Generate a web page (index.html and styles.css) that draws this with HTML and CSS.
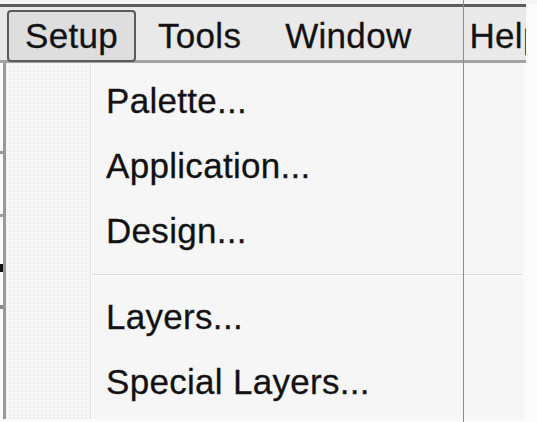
FILE: index.html
```html
<!DOCTYPE html>
<html>
<head>
<meta charset="utf-8">
<link rel="stylesheet" href="styles.css">
</head>
<body>
<div class="screen">
  <div class="topgap"></div>
  <div class="window">
    <div class="menubar">
      <span class="mi active">Setup</span>
      <span class="mi">Tools</span>
      <span class="mi">Window</span>
      <span class="mi last">Help</span>
    </div>
    <div class="below">
      <div class="strip"></div>
      <div class="menu">
        <div class="icons"></div>
        <div class="items">
          <div class="item">Palette...</div>
          <div class="item">Application...</div>
          <div class="item">Design...</div>
          <div class="sep"></div>
          <div class="item">Layers...</div>
          <div class="item">Special Layers...</div>
        </div>
      </div>
    </div>
  </div>
  <div class="vline"></div>
</div>
</body>
</html>
```

FILE: styles.css
```css
html, body {
  margin: 0;
  padding: 0;
  background: #fbfbfb;
}
.screen {
  position: relative;
  width: 537px;
  height: 422px;
  overflow: hidden;
  font-family: "Liberation Sans", Arial, sans-serif;
  color: #111;
  -webkit-text-stroke: 0.3px #222;
  letter-spacing: 0.3px;
}
.topgap {
  height: 4px;
  background: #f4f4f4;
}
.window {
  width: 526px;
  border-top: 3px solid #5c5c5c;
  overflow: hidden;
}
.menubar {
  display: flex;
  height: 56px;
  padding-left: 7px;
  background: #e9e9e9;
  box-shadow: inset 0 -3px 0 #a3a3a3;
  white-space: nowrap;
}
.mi {
  box-sizing: border-box;
  height: 52px;
  margin-top: 3px;
  padding: 0 20px;
  border: 2px solid transparent;
  border-radius: 4px;
  font-size: 35px;
  line-height: 47px;
}
.mi.active {
  padding: 0 16px;
  background: #dedede;
  border-color: #5a5a5a;
}
.mi.last {
  margin-left: 14px;
}
.below {
  display: flex;
  height: 356px;
}
.strip {
  width: 3px;
  background: linear-gradient(to bottom,
    #fafafa 0, #fafafa 88px,
    #9a9a9a 88px, #9a9a9a 91px,
    #fafafa 91px, #fafafa 151px,
    #a0a0a0 151px, #a0a0a0 154px,
    #fafafa 154px, #fafafa 201px,
    #111 201px, #111 209px,
    #fafafa 209px, #fafafa 242px,
    #8a8a8a 242px, #8a8a8a 246px,
    #fafafa 246px);
}
.menu {
  display: flex;
  width: 518px;
  border-left: 3px solid #999;
  background: #f6f6f6;
}
.icons {
  width: 84px;
  border-right: 1px solid #e2e2e2;
  background-color: #f2f2f2;
  background-image: radial-gradient(circle, #fbfbfb 0.8px, transparent 1.2px);
  background-size: 4px 4px;
}
.items {
  flex: 1;
  padding-top: 5px;
  border-left: 1px solid #fdfdfd;
}
.item {
  height: 65px;
  padding-left: 14px;
  font-size: 35px;
  line-height: 65px;
  white-space: nowrap;
}
.sep {
  height: 21px;
  box-sizing: border-box;
  padding-top: 11px;
  margin-right: 2px;
}
.sep::before {
  content: "";
  display: block;
  height: 1px;
  background: #dcdcdc;
  border-bottom: 1px solid #fefefe;
}
.vline {
  position: absolute;
  left: 463px;
  top: 0;
  width: 1px;
  height: 422px;
  background: #8c8c8c;
}
```
